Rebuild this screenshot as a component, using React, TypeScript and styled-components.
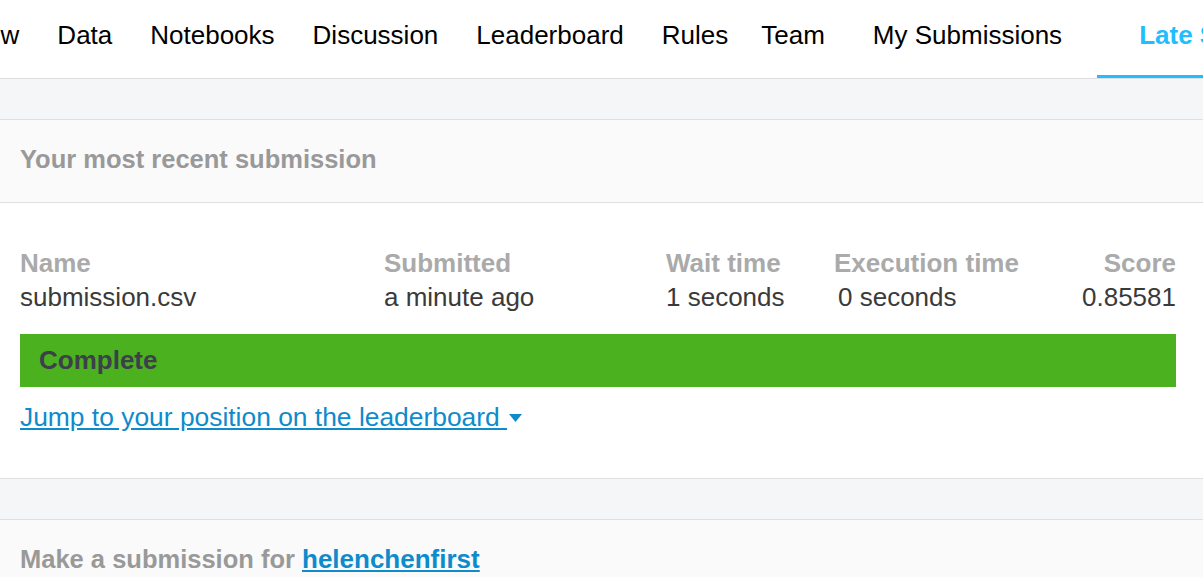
import React from 'react';
import styled, { createGlobalStyle } from 'styled-components';

const GlobalStyle = createGlobalStyle`
  html, body {
    margin: 0;
    padding: 0;
    background: #ffffff;
    overflow: hidden;
  }
  body {
    font-family: "Liberation Sans", Arial, sans-serif;
    color: #3c3c3c;
  }
`;

const Page = styled.div`
  width: 1203px;
  display: flex;
  flex-direction: column;
`;

const NavBar = styled.nav`
  height: 78px;
  border-bottom: 1px solid #dedfe0;
  overflow: hidden;
  background: #fff;
`;

// the tab strip is scrolled so that "Overview" is mostly out of view
const NavList = styled.ul`
  display: flex;
  margin: 0 0 0 -108px;
  padding: 0;
  list-style: none;
  height: 100%;
`;

const Tab = styled.li<{ $active?: boolean; $padLeft?: number; $gapLeft?: number }>`
  box-sizing: border-box;
  height: 78px;
  padding: 20px 19px 0 ${(p) => p.$padLeft ?? 19}px;
  margin-left: ${(p) => p.$gapLeft ?? 0}px;
  font-size: 26px;
  line-height: 30px;
  white-space: nowrap;
  color: ${(p) => (p.$active ? '#20beff' : '#000')};
  font-weight: ${(p) => (p.$active ? 700 : 400)};
  border-bottom: 3px solid ${(p) => (p.$active ? '#20beff' : 'transparent')};
  margin-bottom: -1px;
`;

const Band = styled.div`
  height: 40px;
  background: #f4f6f7;
  border-bottom: 1px solid #dfe0e1;
`;

const SectionHeader = styled.div`
  box-sizing: border-box;
  height: 83px;
  padding: 0 20px 3px;
  display: flex;
  align-items: center;
  background: #fafafa;
  border-bottom: 1px solid #dfe0e1;
  font-size: 25.5px;
  font-weight: 700;
  color: #999999;
  white-space: pre;
`;

const HeaderLink = styled.a`
  color: #0e8bcb;
  text-decoration: underline;
  font-size: 26px;
`;

const Content = styled.section`
  padding: 43px 27px 44px 20px;
  border-bottom: 1px solid #dfe0e1;
  background: #fff;
`;

const Columns = styled.div`
  display: grid;
  grid-template-columns: 364px 282px 168px 1fr auto;
  font-size: 26px;
  line-height: 34px;
`;

const ColHead = styled.div<{ $right?: boolean }>`
  font-weight: 700;
  color: #aaaaaa;
  text-align: ${(p) => (p.$right ? 'right' : 'left')};
`;

const ColValue = styled.div<{ $right?: boolean; $indent?: number }>`
  color: #3a3a3a;
  padding-left: ${(p) => p.$indent ?? 0}px;
  text-align: ${(p) => (p.$right ? 'right' : 'left')};
`;

const StatusBar = styled.div`
  margin-top: 20px;
  height: 53px;
  display: flex;
  align-items: center;
  padding-left: 19px;
  background: #4bb11e;
  font-size: 26px;
  font-weight: 700;
  color: #3d3f4a;
`;

const JumpRow = styled.div`
  margin-top: 13px;
  font-size: 26.4px;
  line-height: 34px;
  display: flex;
  align-items: center;
`;

const JumpLink = styled.a`
  color: #0e8bcb;
  text-decoration: underline;
  white-space: pre;
`;

const Caret = styled.svg`
  width: 13px;
  height: 8px;
  margin-left: 2px;
  margin-top: 2px;
`;

const tabs = [
  { label: 'Overview' },
  { label: 'Data' },
  { label: 'Notebooks' },
  { label: 'Discussion' },
  { label: 'Leaderboard' },
  { label: 'Rules' },
  { label: 'Team', padLeft: 14 },
  { label: 'My Submissions', padLeft: 29 },
  { label: 'Late Submission', padLeft: 42, gapLeft: 16, active: true },
];

const App: React.FC = () => {
  return (
    <Page>
      <GlobalStyle />
      <NavBar>
        <NavList>
          {tabs.map((t) => (
            <Tab key={t.label} $active={t.active} $padLeft={t.padLeft} $gapLeft={t.gapLeft}>
              {t.label}
            </Tab>
          ))}
        </NavList>
      </NavBar>

      <Band />
      <SectionHeader>Your most recent submission</SectionHeader>

      <Content>
        <Columns>
          <ColHead>Name</ColHead>
          <ColHead>Submitted</ColHead>
          <ColHead>Wait time</ColHead>
          <ColHead>Execution time</ColHead>
          <ColHead $right>Score</ColHead>
          <ColValue>submission.csv</ColValue>
          <ColValue>a minute ago</ColValue>
          <ColValue>1 seconds</ColValue>
          <ColValue $indent={4}>0 seconds</ColValue>
          <ColValue $right>0.85581</ColValue>
        </Columns>

        <StatusBar>Complete</StatusBar>

        <JumpRow>
          <JumpLink href="#leaderboard">Jump to your position on the leaderboard </JumpLink>
          <Caret viewBox="0 0 13 8">
            <path d="M0 0 H13 L6.5 8 Z" fill="#0e8bcb" />
          </Caret>
        </JumpRow>
      </Content>

      <Band />
      <SectionHeader>
        {'Make a submission for '}
        <HeaderLink href="#team">helenchenfirst</HeaderLink>
      </SectionHeader>
    </Page>
  );
};

export default App;
